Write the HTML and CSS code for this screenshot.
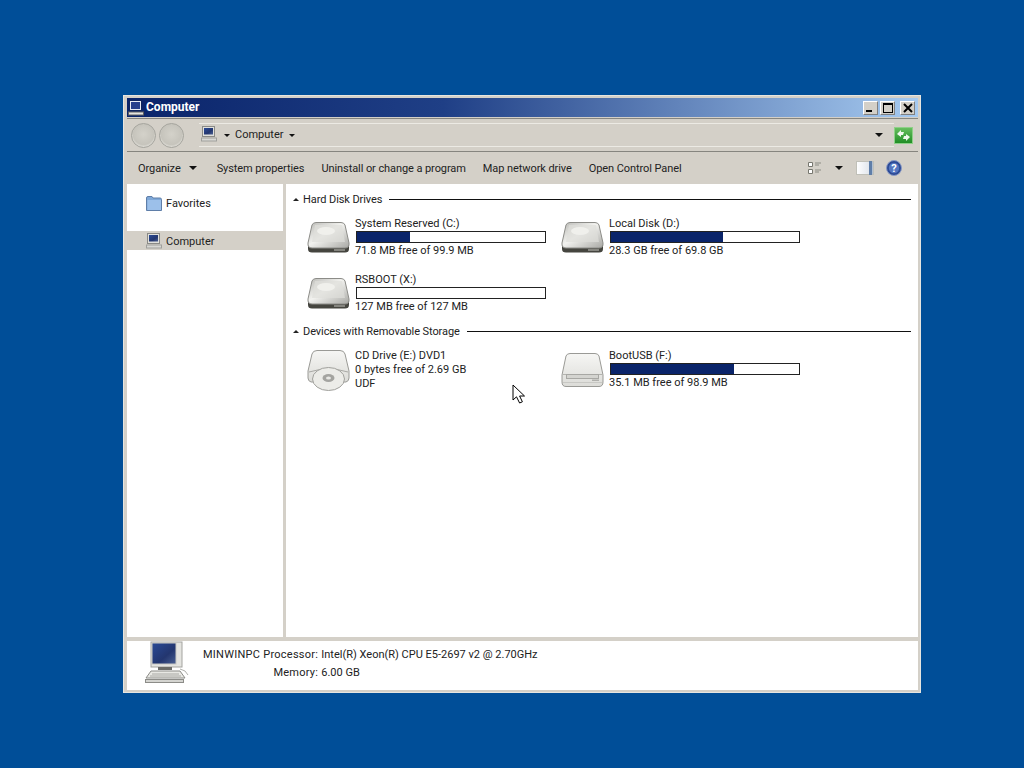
FILE: index.html
```html
<!DOCTYPE html>
<html lang="en">
<head>
    <meta charset="UTF-8">
    <title>Computer</title>
    <link rel="stylesheet" href="styles.css">
</head>
<body>
    <svg class="defs" width="0" height="0">
        <defs>
            <linearGradient id="hddTop" x1="0" y1="0" x2="1" y2="1">
                <stop offset="0" stop-color="#b9b9b5"/>
                <stop offset="0.45" stop-color="#f2f2ef"/>
                <stop offset="1" stop-color="#a8a8a4"/>
            </linearGradient>
            <linearGradient id="remTop" x1="0" y1="0" x2="0" y2="1">
                <stop offset="0" stop-color="#f6f6f4"/>
                <stop offset="1" stop-color="#dcdcd8"/>
            </linearGradient>
            <linearGradient id="screen" x1="0" y1="0" x2="1" y2="1">
                <stop offset="0" stop-color="#2a4a96"/>
                <stop offset="0.6" stop-color="#23366f"/>
                <stop offset="1" stop-color="#4a5f92"/>
            </linearGradient>
            <linearGradient id="green" x1="0" y1="0" x2="0" y2="1">
                <stop offset="0" stop-color="#68c060"/>
                <stop offset="1" stop-color="#1f8c24"/>
            </linearGradient>
            <linearGradient id="paneFill" x1="0" y1="0" x2="1" y2="0">
                <stop offset="0" stop-color="#ffffff"/>
                <stop offset="0.7" stop-color="#e4e8ee"/>
                <stop offset="1" stop-color="#a8b8cc"/>
            </linearGradient>
            <symbol id="hdd" viewBox="0 0 43 31">
                <path d="M1 23 L1 27 Q1 30.5 5 30.5 L38 30.5 Q42 30.5 42 27 L42 23 Z" fill="#45453f"/>
                <path d="M9 0.5 L34 0.5 Q37 0.5 38 3 L42 21 Q42.5 26 38 26 L5 26 Q0.5 26 1 21 L5 3 Q6 0.5 9 0.5 Z" fill="url(#hddTop)" stroke="#8c8c88"/>
                <path d="M8 3 L35 3 L38 20 L5 20 Z" fill="#dededa" opacity="0.7"/>
                <ellipse cx="19" cy="9" rx="9" ry="4" fill="#f0f0ec"/>
                <rect x="27" y="27" width="11" height="2" fill="#85857f"/>
            </symbol>
            <symbol id="usb" viewBox="0 0 43 34">
                <path d="M9 0.5 L34 0.5 Q37 0.5 38 3 L42 22 L42 29 Q42 33.5 38 33.5 L5 33.5 Q1 33.5 1 29 L1 22 L5 3 Q6 0.5 9 0.5 Z" fill="url(#remTop)" stroke="#9a9a96"/>
                <path d="M1.5 21.5 L41.5 21.5" stroke="#b4b4b0"/>
                <rect x="5.5" y="21.5" width="32" height="4" fill="#d4d4d0" stroke="#a8a8a4"/>
                <path d="M2 29.5 L41 29.5" stroke="#c8c8c4"/>
                <rect x="31" y="26.5" width="7" height="1.5" fill="#b0b0ac"/>
            </symbol>
            <symbol id="cd" viewBox="0 0 43 41">
                <path d="M10 0.5 L33 0.5 Q37 0.5 38 4 L42 21 L42 28 Q42 31 39 32 L4 32 Q1 31 1 28 L1 21 L5 4 Q6 0.5 10 0.5 Z" fill="url(#remTop)" stroke="#9a9a96"/>
                <path d="M2 22 Q21.5 16 41 22" fill="none" stroke="#a8a8a4"/>
                <ellipse cx="21.5" cy="29" rx="16" ry="11.5" fill="#ecece8" stroke="#a0a09c"/>
                <ellipse cx="21.5" cy="28" rx="6" ry="4" fill="#a4a4a0"/>
                <ellipse cx="21.5" cy="28" rx="2.5" ry="1.6" fill="#e8e8e4"/>
            </symbol>
            <symbol id="pc" viewBox="0 0 16 16">
                <rect x="1.5" y="0.5" width="12" height="10" fill="#e0e0dc" stroke="#8a8a86"/>
                <rect x="3" y="2" width="9" height="6.5" fill="url(#screen)"/>
                <rect x="0.5" y="12" width="15" height="3" fill="#d8d8d4" stroke="#a0a09c"/>
            </symbol>
        </defs>
    </svg>

    <div class="window">
        <div class="titlebar">
            <svg class="title-icon" width="16" height="16" viewBox="0 0 16 16">
                <rect x="1.5" y="0.5" width="12" height="10" fill="#e8ecf4" stroke="#10245c"/>
                <rect x="3" y="2" width="9" height="7" fill="#27408c"/>
                <rect x="0.5" y="12" width="15" height="3" fill="#e4e4e0" stroke="#606060"/>
            </svg>
            <span class="title-text">Computer</span>
            <div class="caption-buttons">
                <button class="caption-btn"><span class="glyph-min"></span></button>
                <button class="caption-btn"><span class="glyph-max"></span></button>
                <button class="caption-btn close-btn">
                    <svg width="10" height="10" viewBox="0 0 10 10"><path d="M1 1 L9 9 M9 1 L1 9" stroke="#000" stroke-width="2"/></svg>
                </button>
            </div>
        </div>

        <div class="addressbar">
            <div class="nav-buttons">
                <span class="nav-round"></span>
                <span class="nav-round"></span>
            </div>
            <div class="address-field">
                <svg class="address-icon" width="16" height="16"><use href="#pc"/></svg>
                <span class="arrow-small first-arrow"></span>
                <span class="address-text">Computer</span>
                <span class="arrow-small"></span>
                <span class="address-spacer"></span>
                <span class="arrow-down address-arrow"></span>
            </div>
            <svg class="refresh" width="19" height="17" viewBox="0 0 19 17">
                <rect x="0.5" y="0.5" width="18" height="16" fill="url(#green)" stroke="#8ed088"/>
                <path d="M3 7 L7 3 L7 5 L10 5 L9 8 L7 8 L7 10 Z M16 10 L12 14 L12 12 L9 12 L10 9 L12 9 L12 7 Z" fill="#f0f8ee"/>
            </svg>
        </div>

        <div class="toolbar">
            <span class="tool-item">Organize</span>
            <span class="arrow-down organize-arrow"></span>
            <span class="tool-item">System properties</span>
            <span class="tool-item">Uninstall or change a program</span>
            <span class="tool-item">Map network drive</span>
            <span class="tool-item">Open Control Panel</span>
            <span class="address-spacer"></span>
            <svg class="views-icon" width="14" height="14" viewBox="0 0 14 14">
                <path d="M0.5 1.5 H4.5 V5.5 H0.5 Z M0.5 8.5 H4.5 V12.5 H0.5 Z" fill="#fff" stroke="#77776f"/>
                <path d="M7 2 H13 M7 4 H11 M7 9 H13 M7 11 H11" stroke="#8c8c84"/>
            </svg>
            <span class="arrow-down views-arrow"></span>
            <svg class="pane-icon" width="18" height="14" viewBox="0 0 18 14">
                <rect x="0.5" y="0.5" width="17" height="13" fill="url(#paneFill)" stroke="#c0c0b8"/>
                <rect x="13" y="0" width="3" height="14" fill="#5f7ea8"/>
            </svg>
            <svg class="help-icon" width="16" height="16" viewBox="0 0 16 16">
                <circle cx="8" cy="8" r="7.5" fill="#2c4a96" stroke="#8a9ac4"/>
                <circle cx="8" cy="8" r="5.2" fill="#5476c0"/>
                <text x="8" y="12" text-anchor="middle" class="help-mark">?</text>
            </svg>
        </div>

        <div class="main">
            <div class="sidebar">
                <div class="nav-row favorites">
                    <svg class="nav-icon" width="16" height="15" viewBox="0 0 16 15">
                        <path d="M0.5 2 Q0.5 0.5 2 0.5 L6 0.5 L7 2 L14 2 Q15.5 2 15.5 3.5 L15.5 14.5 L0.5 14.5 Z" fill="#7fa8d8" stroke="#5f7ea8"/>
                        <path d="M1.5 4 H15 V14 H1.5 Z" fill="#9cc0ea"/>
                    </svg>
                    <span>Favorites</span>
                </div>
                <div class="nav-row selected">
                    <svg class="nav-icon" width="16" height="16"><use href="#pc"/></svg>
                    <span>Computer</span>
                </div>
            </div>
            <div class="splitter"></div>
            <div class="content">
                <div class="group-head">
                    <span class="arrow-up"></span>
                    <span>Hard Disk Drives</span>
                    <span class="group-line"></span>
                </div>
                <div class="drive-grid hard-grid">
                    <div class="drive">
                        <svg class="drive-icon hdd-icon" width="43" height="31"><use href="#hdd"/></svg>
                        <div class="drive-info">
                            <div>System Reserved (C:)</div>
                            <div class="bar"><div class="bar-fill" style="width: 28%"></div></div>
                            <div>71.8 MB free of 99.9 MB</div>
                        </div>
                    </div>
                    <div class="drive">
                        <svg class="drive-icon hdd-icon" width="43" height="31"><use href="#hdd"/></svg>
                        <div class="drive-info">
                            <div>Local Disk (D:)</div>
                            <div class="bar"><div class="bar-fill" style="width: 59.5%"></div></div>
                            <div>28.3 GB free of 69.8 GB</div>
                        </div>
                    </div>
                    <div class="drive">
                        <svg class="drive-icon hdd-icon" width="43" height="31"><use href="#hdd"/></svg>
                        <div class="drive-info">
                            <div>RSBOOT (X:)</div>
                            <div class="bar"></div>
                            <div>127 MB free of 127 MB</div>
                        </div>
                    </div>
                </div>
                <div class="group-head">
                    <span class="arrow-up"></span>
                    <span>Devices with Removable Storage</span>
                    <span class="group-line"></span>
                </div>
                <div class="drive-grid">
                    <div class="drive">
                        <svg class="drive-icon cd-icon" width="43" height="41"><use href="#cd"/></svg>
                        <div class="drive-info">
                            <div>CD Drive (E:) DVD1</div>
                            <div>0 bytes free of 2.69 GB</div>
                            <div>UDF</div>
                        </div>
                    </div>
                    <div class="drive">
                        <svg class="drive-icon usb-icon" width="43" height="34"><use href="#usb"/></svg>
                        <div class="drive-info">
                            <div>BootUSB (F:)</div>
                            <div class="bar"><div class="bar-fill" style="width: 65.4%"></div></div>
                            <div>35.1 MB free of 98.9 MB</div>
                        </div>
                    </div>
                </div>
            </div>
        </div>

        <div class="statusbar">
            <svg class="status-icon" width="46" height="43" viewBox="0 0 46 43">
                <rect x="7" y="1" width="31" height="25" fill="#e4e4e0" stroke="#a4a4a0"/>
                <rect x="8" y="2" width="24" height="21" fill="url(#screen)" stroke="#c8c8c4"/>
                <rect x="14" y="26" width="14" height="3" fill="#6c6c68"/>
                <path d="M7 30 L36 30 L41 37 L2 37 Z" fill="#e8e8e4" stroke="#8c8c88"/>
                <path d="M8 33 H35 M6 35 H37" stroke="#a8a8a4"/>
                <path d="M36 28 Q42 29 44 34" fill="none" stroke="#b0b0ac"/>
                <rect x="1.5" y="38.5" width="38" height="3" fill="#d4d4d0" stroke="#8c8c88"/>
            </svg>
            <div class="status-grid">
                <span class="status-label">MINWINPC Processor:</span>
                <span>Intel(R) Xeon(R) CPU E5-2697 v2 @ 2.70GHz</span>
                <span class="status-label">Memory:</span>
                <span>6.00 GB</span>
            </div>
        </div>
    </div>

    <svg class="cursor" width="15" height="20" viewBox="0 0 15 20">
        <path d="M1 1 L1 16 L4.5 12.8 L7.6 19 L10.4 17.8 L7.6 12 L12.5 12 Z" fill="#fff" stroke="#000"/>
    </svg>
</body>
</html>
```

FILE: styles.css
```css
html, body {
    margin: 0;
    height: 100%;
}
body {
    background-color: #004e98;
    font-family: Roboto, "Liberation Sans", Arial, sans-serif;
    font-size: 11px;
    color: #222;
    overflow: hidden;
    position: relative;
}
.defs {
    position: absolute;
}
.window {
    position: absolute;
    left: 123px;
    top: 95px;
    width: 791px;
    height: 592px;
    padding: 2px 2px 2px 3px;
    background-color: #d4d0c8;
    border: 1px solid #e6e5e0;
    display: flex;
    flex-direction: column;
}
.titlebar {
    height: 19px;
    flex: none;
    display: flex;
    align-items: center;
    padding: 0 3px 0 1px;
    background: linear-gradient(to right, #0a246a 0%, #1f3f86 40%, #a6caf0 100%);
}
.title-text {
    color: #fff;
    font-weight: bold;
    font-size: 12px;
    margin: 0 0 1px 2px;
}
.caption-buttons {
    margin-left: auto;
    display: flex;
    gap: 2px;
}
.close-btn {
    margin-left: 3px;
}
.caption-btn {
    width: 15px;
    height: 14px;
    padding: 0;
    background-color: #d4d0c8;
    border: 1px solid #808080;
    border-top-color: #fff;
    border-left-color: #fff;
    display: flex;
    align-items: center;
    justify-content: center;
}
.glyph-min {
    width: 6px;
    height: 2px;
    background-color: #000;
    margin-top: 7px;
    margin-right: 3px;
}
.glyph-max {
    width: 8px;
    height: 7px;
    border: 1px solid #000;
    border-top-width: 2px;
}
.addressbar {
    height: 32px;
    flex: none;
    margin-top: 1px;
    display: flex;
    align-items: center;
    border-top: 1px solid #86857f;
    border-bottom: 1px solid #86857f;
}
.nav-buttons {
    display: flex;
    gap: 3px;
    margin-left: 4px;
}
.nav-round {
    width: 23px;
    height: 23px;
    border-radius: 50%;
    background: radial-gradient(circle at 50% 45%, #d4d2ca 0%, #c6c4bc 60%, #f4f3ee 85%);
    border: 1px solid #a5a49d;
}
.address-field {
    flex: 1;
    height: 22px;
    margin-left: 15px;
    display: flex;
    align-items: center;
    border-top: 1px solid #eceae4;
    border-bottom: 1px solid #eceae4;
}
.address-icon {
    margin-left: 2px;
    margin-bottom: 3px;
}
.address-text {
    margin-bottom: 2px;
}
.arrow-small {
    width: 0;
    height: 0;
    margin-left: 6px;
    border-left: 3px solid transparent;
    border-right: 3px solid transparent;
    border-top: 3px solid #111;
}
.first-arrow {
    margin-left: 7px;
    margin-right: 5px;
}
.address-spacer {
    flex: 1;
}
.arrow-down {
    width: 0;
    height: 0;
    border-left: 4px solid transparent;
    border-right: 4px solid transparent;
    border-top: 4px solid #111;
}
.address-arrow {
    margin-right: 11px;
}
.refresh {
    margin: 0 5px 0 0;
}
.toolbar {
    height: 32px;
    flex: none;
    display: flex;
    align-items: center;
    padding-left: 11px;
}
.tool-item {
    margin-right: 17px;
    letter-spacing: -0.08px;
}
.organize-arrow {
    margin-left: -9px;
    margin-right: 20px;
}
.views-arrow {
    margin: 0 13px;
}
.pane-icon {
    margin-right: 12px;
}
.help-icon {
    margin-right: 16px;
}
.help-mark {
    font-size: 11px;
    font-weight: bold;
    fill: #fff;
}
.main {
    flex: 1;
    display: flex;
    min-height: 0;
    background-color: #fff;
}
.sidebar {
    width: 156px;
    flex: none;
    padding-top: 10px;
}
.nav-row {
    height: 19px;
    display: flex;
    align-items: center;
    padding-left: 19px;
}
.nav-row span {
    margin-left: 4px;
}
.favorites {
    margin-bottom: 19px;
    height: 18px;
}
.selected {
    background-color: #d4d0c8;
}
.selected span {
    margin-top: 2px;
}
.splitter {
    width: 3px;
    flex: none;
    background-color: #d4d0c8;
}
.content {
    flex: 1;
    padding: 8px 7px 0 7px;
}
.group-head {
    display: flex;
    align-items: center;
    height: 14px;
    letter-spacing: -0.08px;
}
.arrow-up {
    width: 0;
    height: 0;
    border-left: 3px solid transparent;
    border-right: 3px solid transparent;
    border-bottom: 3px solid #222;
    margin-right: 4px;
}
.group-line {
    flex: 1;
    height: 1px;
    background-color: #111;
    margin-left: 7px;
}
.drive-grid {
    display: grid;
    grid-template-columns: 254px 254px;
    row-gap: 15px;
    margin-top: 10px;
    padding-left: 14px;
}
.hard-grid {
    margin-bottom: 11px;
}
.drive {
    display: flex;
    height: 41px;
    align-items: flex-start;
}
.drive-icon {
    flex: none;
}
.hdd-icon {
    margin-top: 6px;
}
.cd-icon {
    margin-top: 2px;
}
.usb-icon {
    margin-top: 5px;
}
.drive-info {
    margin: 1px 0 0 5px;
    line-height: 14px;
}
.bar {
    width: 188px;
    height: 10px;
    border: 1px solid #222;
    background-color: #fff;
    margin: 0 0 1px 1px;
}
.bar-fill {
    height: 100%;
    background-color: #0a246a;
}
.statusbar {
    height: 49px;
    flex: none;
    margin-top: 4px;
    background-color: #fff;
    display: flex;
    align-items: flex-start;
}
.status-icon {
    margin-left: 17px;
    flex: none;
}
.status-grid {
    display: grid;
    grid-template-columns: auto auto;
    column-gap: 3px;
    row-gap: 4px;
    margin: 7px 0 0 13px;
    line-height: 14px;
}
.status-label {
    text-align: right;
    letter-spacing: 0.26px;
}
.cursor {
    position: absolute;
    left: 512px;
    top: 384px;
}
```
